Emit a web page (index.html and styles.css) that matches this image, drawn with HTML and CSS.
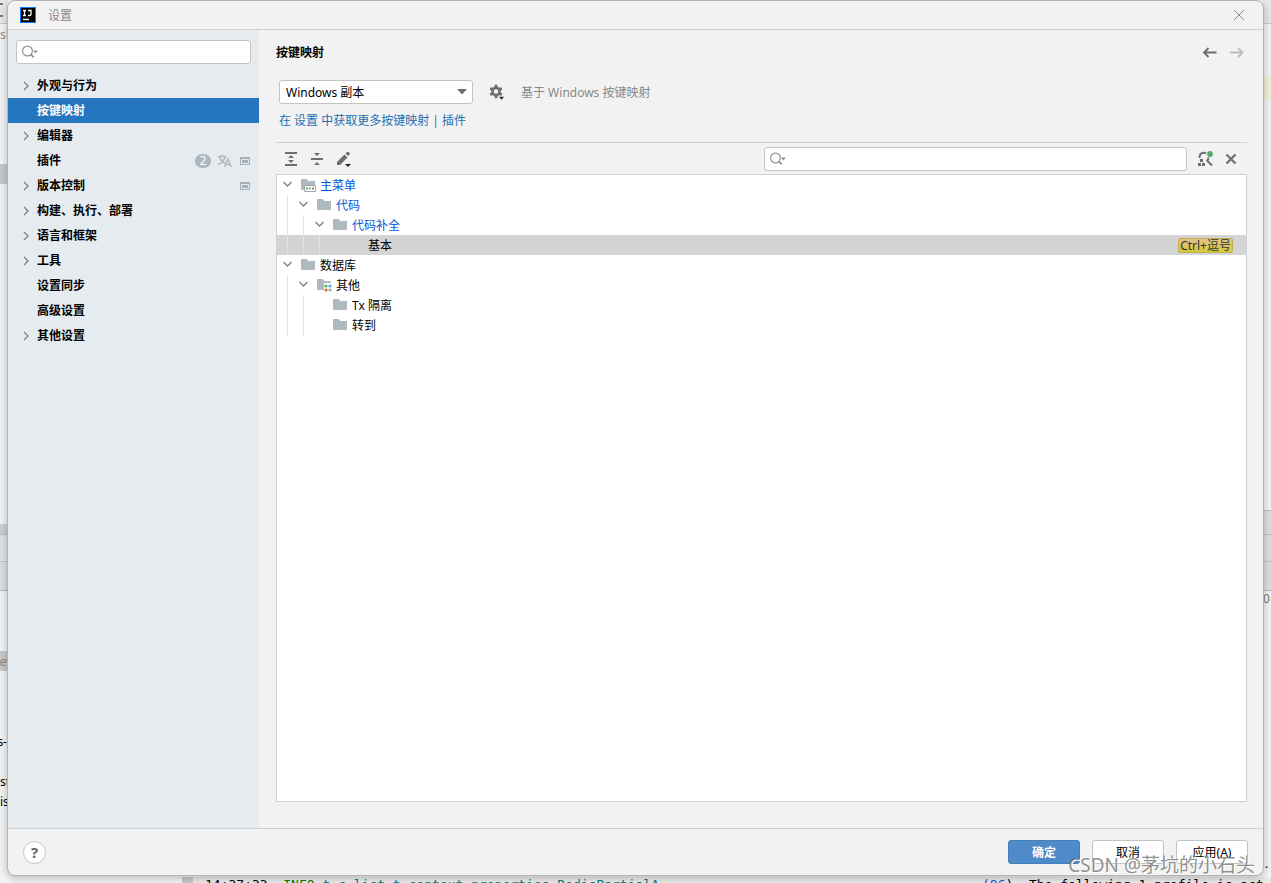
FILE: index.html
```html
<!DOCTYPE html>
<html lang="zh-CN">
<head>
<meta charset="utf-8">
<title>设置</title>
<link rel="stylesheet" href="styles.css">
</head>
<body>
<svg class="defs" aria-hidden="true">
  <symbol id="chev-r" viewBox="0 0 16 16"><path d="M6 4l4 4-4 4" fill="none" stroke="#7f8487" stroke-width="1.4"/></symbol>
  <symbol id="chev-d" viewBox="0 0 16 16"><path d="M3.500 5l4 4 4-4" fill="none" stroke="#7f8487" stroke-width="1.4"/></symbol>
  <symbol id="folder" viewBox="0 0 16 16"><path d="M1 13V2h5.500L8.500 4H15v9z" fill="#aeb9c0"/></symbol>
  <symbol id="search" viewBox="0 0 20 16"><circle cx="6.500" cy="7" r="4.900" fill="none" stroke="#8c969d" stroke-width="1.200"/><path d="M9.800 10.300l3 3" stroke="#8c969d" stroke-width="1.800"/><path d="M12 6.500h5L14.500 9.500z" fill="#8c969d"/></symbol>
  <symbol id="project" viewBox="0 0 16 16"><path fill-rule="evenodd" d="M3 4h10v8H3zm1 2v5h8V6zM5 7h6v3H5z" fill="#a3b1ba"/></symbol>
</svg>
<div class="desktop">
  <div class="backdrop" aria-hidden="true">
    <div class="edge left">
      <i class="top"></i><i class="tick t1"></i><i class="tick t2"></i><i class="grey g2"></i><i class="panel p1"></i><i class="grey g3"></i>
      <span class="code c1">sl</span><span class="code c2">ev</span><span class="code c3">s-</span><span class="code c4">st</span><span class="code c5">is</span>
    </div>
    <div class="edge right">
      <i class="top"></i><i class="yellow"></i><i class="panel p2"></i><span class="code c6">0</span><span class="code c7">.</span>
    </div>
    <div class="console"><span>14:37:33 &nbsp;<b class="info">INFO</b> <b class="cls">t.c.list.t.context.properties.RedisPartialA</b></span><span class="con-right"><b class="num">(86</b>) &nbsp;The following 1 profile is act</span></div>
  </div>
  <main class="dialog">
    <header class="titlebar">
      <svg class="logo" viewBox="0 0 16 16"><path fill="#087cfa" d="M0 0h16v16H0z"/><path fill="#000" d="M1 1h14v14H1z"/><path d="M3 3.500h3M4.500 3.500v5M3 8.500h3M8 3.500h3v3.700q0 1.300-1.500 1.300H8M3 12.500h6" fill="none" stroke="#fff" stroke-width="1.300"/></svg>
      <h1>设置</h1>
      <button class="close" aria-label="关闭"><svg viewBox="0 0 16 16"><path d="M3 3l10 10M13 3L3 13" stroke="#8c8c8c" stroke-width="1"/></svg></button>
    </header>
    <div class="body">
      <aside class="sidebar">
        <label class="search"><svg viewBox="0 0 20 16"><use href="#search"/></svg><input type="text" aria-label="搜索设置"></label>
        <nav>
          <a href="#"><svg><use href="#chev-r"/></svg><span>外观与行为</span></a>
          <a href="#" class="active"><svg></svg><span>按键映射</span></a>
          <a href="#"><svg><use href="#chev-r"/></svg><span>编辑器</span></a>
          <a href="#"><svg></svg><span>插件</span><b class="count">2</b><svg class="translate" viewBox="0 0 16 16"><path d="M1 3.500h8.500M5 1.500v2M2.500 4C4 8 6 9.500 8 10.500M8 4C7 8 4.500 10 1 11.500M7.500 14l3.300-8 3.400 8M8.800 11.500h4.200" fill="none" stroke="#b3bcc2" stroke-width="1.600"/></svg><svg><use href="#project"/></svg></a>
          <a href="#"><svg><use href="#chev-r"/></svg><span>版本控制</span><svg><use href="#project"/></svg></a>
          <a href="#"><svg><use href="#chev-r"/></svg><span>构建、执行、部署</span></a>
          <a href="#"><svg><use href="#chev-r"/></svg><span>语言和框架</span></a>
          <a href="#"><svg><use href="#chev-r"/></svg><span>工具</span></a>
          <a href="#"><svg></svg><span>设置同步</span></a>
          <a href="#"><svg></svg><span>高级设置</span></a>
          <a href="#"><svg><use href="#chev-r"/></svg><span>其他设置</span></a>
        </nav>
      </aside>
      <section class="content">
        <div class="heading"><h2>按键映射</h2>
          <button aria-label="后退"><svg viewBox="0 0 16 16"><path d="M14.500 7.500H2.500M6.500 3L2 7.500 6.500 12" fill="none" stroke="#6e6e6e" stroke-width="1.800"/></svg></button>
          <button aria-label="前进" disabled><svg viewBox="0 0 16 16"><path d="M1 7.500h12M9 3l4.500 4.500L9 12" fill="none" stroke="#bdbdbd" stroke-width="1.800"/></svg></button>
        </div>
        <div class="scheme">
          <div class="combo"><select aria-label="按键映射方案"><option>Windows 副本</option></select><svg viewBox="0 0 10 6"><path d="M0 0h10L5 5.500z" fill="#6e6e6e"/></svg></div>
          <button aria-label="方案操作"><svg viewBox="0 0 16 16"><circle cx="7" cy="7.500" r="3.600" fill="none" stroke="#6e6e6e" stroke-width="2.600"/><path d="M7 .8v2.700M7 11.500v2.700M1.200 4.200l2.300 1.300M10.500 9.500l2.300 1.300M1.200 10.800l2.300-1.300M10.500 5.500l2.300-1.300" stroke="#6e6e6e" stroke-width="2.800"/><path d="M9.500 12.500h6L12.500 16z" fill="#222" stroke="#f2f2f2" stroke-width=".5"/></svg></button>
          <span class="based">基于 Windows 按键映射</span>
        </div>
        <p class="more"><a href="#">在 设置 中获取更多按键映射</a> | <a href="#">插件</a></p>
        <div class="toolbar">
          <button aria-label="全部展开"><svg viewBox="0 0 16 16"><path d="M2 1h12v2H2zM2 13h12v2H2zM5 7l3-3 3 3zM5 9h6l-3 3z" fill="#6e6e6e"/></svg></button>
          <button aria-label="全部折叠"><svg viewBox="0 0 16 16"><path d="M2 7h12v2H2zM5 2h6L8 5zM5 14l3-3 3 3z" fill="#6e6e6e"/></svg></button>
          <button aria-label="编辑快捷键"><svg viewBox="0 0 16 16"><path d="M2 14v-3l7.500-7.500 3 3L5 14zM10.500 2.500L12 1q1-.8 2 .2l.6.800q.8 1-.2 1.800L13 5z" fill="#6e6e6e"/><path d="M10 13h6l-3 3z" fill="#222"/></svg></button>
          <label class="search filter"><svg viewBox="0 0 20 16"><use href="#search"/></svg><input type="text" aria-label="搜索操作"></label>
          <button aria-label="按快捷键查找"><svg viewBox="0 0 16 16"><path d="M2.500 7V5.500C3 1.500 7 1 9 2.500M11.500 6.500q0 2-2 3.500M10.500 10l4.500 4.500" fill="none" stroke="#6e6e6e" stroke-width="2"/><path d="M3 8h3v3H3zM1 12h3v3H1zM5 12h3v3H5z" fill="#6e6e6e"/><circle cx="13" cy="3" r="2.900" fill="#59a869"/></svg></button>
          <button aria-label="清除过滤"><svg viewBox="0 0 16 16"><path d="M3.500 3.500l9 9M12.500 3.500l-9 9" stroke="#6e6e6e" stroke-width="2.200"/></svg></button>
        </div>
        <ul class="tree">
          <li class="blue"><svg><use href="#chev-d"/></svg><svg viewBox="0 0 16 16"><use href="#folder"/><path d="M4 8h12v7.500H4z" fill="#fff"/><path d="M4.500 8.500h11v6h-11z" fill="#fff" stroke="#9aa7b0"/><path d="M6 10.500h2v2H6z" fill="#62b543"/><path d="M9 10.500h2v2H9z" fill="#40b6e0"/><path d="M12 10.500h2v2h-2z" fill="#f26522"/></svg><span>主菜单</span></li>
          <li class="blue"><i></i><svg><use href="#chev-d"/></svg><svg><use href="#folder"/></svg><span>代码</span></li>
          <li class="blue"><i></i><i></i><svg><use href="#chev-d"/></svg><svg><use href="#folder"/></svg><span>代码补全</span></li>
          <li class="selected"><i></i><i></i><i></i><svg></svg><svg></svg><span>基本</span><kbd>Ctrl+逗号</kbd></li>
          <li><svg><use href="#chev-d"/></svg><svg><use href="#folder"/></svg><span>数据库</span></li>
          <li><i></i><svg><use href="#chev-d"/></svg><svg viewBox="0 0 16 16"><use href="#folder"/><path d="M8 6h8v9H8z" fill="#fff"/><circle cx="10" cy="9" r="1.600" fill="#62b543"/><circle cx="14" cy="9" r="1.600" fill="#40b6e0"/><circle cx="10" cy="13" r="1.600" fill="#f26522"/><circle cx="14" cy="13" r="1.600" fill="#9aa7b0"/></svg><span>其他</span></li>
          <li><i></i><i></i><svg></svg><svg><use href="#folder"/></svg><span>Tx 隔离</span></li>
          <li><i></i><i></i><svg></svg><svg><use href="#folder"/></svg><span>转到</span></li>
        </ul>
      </section>
    </div>
    <footer>
      <button class="help" aria-label="帮助">?</button>
      <button class="btn primary">确定</button>
      <button class="btn">取消</button>
      <button class="btn">应用(A)</button>
    </footer>
  </main>
  <div class="watermark">CSDN @茅坑的小石头</div>
</div>
</body>
</html>
```
FILE: styles.css
```css
* { box-sizing: border-box; }
body {
  margin: 0;
  font: 12px/16px "Noto Sans", "Noto Sans CJK SC", sans-serif;
  color: #000;
}
.defs { position: absolute; width: 0; height: 0; }
.desktop {
  position: relative;
  height: 100vh;
  padding: 0 7px 7px;
  overflow: hidden;
  background: #f4f4f4;
}
button { padding: 0; border: 0; background: none; font: inherit; color: inherit; }
svg { display: block; width: 16px; height: 16px; flex: none; }
h1, h2, p, ul { margin: 0; padding: 0; font-size: 12px; }
a { color: inherit; text-decoration: none; }

/* editor visible around the dialog */
.backdrop, .edge { position: absolute; inset: 0; }
.edge { width: 8px; overflow: hidden; }
.edge.right { left: auto; right: 0; }
.edge i, .code, .console { position: absolute; }
.edge i { left: 0; width: 8px; }
.code { white-space: nowrap; }
.edge .top { top: 0; height: 24px; border-bottom: 1px solid #c9c9c9; background: #e8e8e8; }
.tick { height: 2px; background: #777; }
.edge .tick { width: 3px; }
.t1 { top: 3px; }
.t2 { top: 15px; }
.grey { background: #c9c9c9; }
.g2 { top: 164px; height: 20px; }
.g3 { top: 651px; height: 20px; }
.panel { top: 524px; height: 67px; background: linear-gradient(#cfcfcf 10px, #bdbdbd 10px, #bdbdbd 11px, #e2e2e2 11px, #e2e2e2 37px, #c4c4c4 37px, #c4c4c4 38px, #dedede 38px, #dedede 66px, #bbb 66px); }
.p2 { top: 510px; height: 81px; background: linear-gradient(#c0c0c0 1px, #dfdfdf 1px, #dfdfdf 24px, #c0c0c0 24px, #c0c0c0 25px, #dfdfdf 25px, #dfdfdf 51px, #c4c4c4 51px, #c4c4c4 52px, #dedede 52px, #dedede 80px, #bbb 80px); }
.yellow { top: 77px; height: 24px; background: #f3efdc; }
.c1 { left: 0; top: 27px; color: #888; }
.c2 { right: -4px; top: 654px; color: #888; }
.c3 { right: 1px; top: 734px; }
.c4 { left: 0; top: 774px; }
.c5 { left: 0; top: 794px; }
.c6 { left: 0; top: 591px; color: #777; }
.c7 { left: 2px; top: 856px; }
.console {
  left: 182px;
  right: 0;
  bottom: -10px;
  padding-left: 12px;
  font: 13px/16px "DejaVu Sans Mono", monospace;
  white-space: nowrap;
  border-left: 11px solid #c9c9c9;
  background: #ebebeb;
}
.console b { font-weight: 400; }
.con-right { position: absolute; left: 789px; }
.info { color: #0a7a0a; }
.cls { color: #008080; }
.num { color: #2a4bd7; }

.dialog {
  position: relative;
  display: flex;
  flex-direction: column;
  height: 100%;
  border: 1px solid #b4b4b4;
  border-radius: 8px;
  overflow: hidden;
  background: #f2f2f2;
  box-shadow: 0 2px 8px rgba(0, 0, 0, .25);
}
.titlebar {
  display: flex;
  align-items: center;
  height: 29px;
  padding: 0 16px 0 12px;
  border-bottom: 1px solid #d1d1d1;
}
.titlebar h1 { flex: 1; margin-left: 12px; padding-top: 2px; font-weight: 400; color: #888; }
.body { display: flex; flex: 1; min-height: 0; }

.sidebar { width: 251px; background: #e6ebef; }
.search {
  display: flex;
  align-items: center;
  height: 24px;
  padding-left: 4px;
  border: 1px solid #c4c4c4;
  border-radius: 3px;
  background: #fff;
}
.search svg { width: 20px; }
.search input { flex: 1; min-width: 0; border: 0; outline: 0; background: none; font: inherit; }
.sidebar .search { margin: 10px 8px 9px; }
nav a {
  display: flex;
  align-items: center;
  height: 25px;
  padding: 0 6px 0 10px;
  font-weight: 700;
}
nav span { flex: 1; margin-left: 3px; }
nav .active { background: #2675bf; color: #fff; }
.count {
  width: 16px;
  height: 14px;
  border-radius: 7px;
  background: #aab7bf;
  color: #fff;
  font-weight: 400;
  line-height: 14px;
  text-align: center;
}
.translate { margin: 0 4px 0 6px; }

.content {
  display: flex;
  flex: 1;
  flex-direction: column;
  min-width: 0;
  padding: 15px 16px 26px 17px;
}
.heading { display: flex; align-items: center; height: 16px; gap: 11px; padding-right: 2px; }
.heading h2 { flex: 1; }
.scheme { display: flex; align-items: center; margin: 19px 0 9px 3px; }
.combo { position: relative; width: 194px; margin-right: 16px; }
.combo select {
  display: block;
  width: 100%;
  height: 24px;
  padding: 2px 6px 0;
  border: 1px solid #c4c4c4;
  border-radius: 3px;
  background: #fff;
  color: #000;
  font: inherit;
  appearance: none;
}
.combo svg { position: absolute; right: 6px; top: 9px; width: 10px; height: 6px; pointer-events: none; }
.based { margin-left: 16px; padding-top: 2px; color: #888; }
.more { margin-left: 3px; color: #2470b3; }
.toolbar {
  display: flex;
  align-items: center;
  gap: 10px;
  height: 32px;
  margin-top: 13px;
  padding: 0 8px 0 7px;
  border-top: 1px solid #d1d1d1;
}
.filter { width: 423px; margin-left: auto; }
.tree { flex: 1; border: 1px solid #d1d1d1; background: #fff; list-style: none; }
.tree li { display: flex; align-items: center; height: 20px; padding: 0 13px 0 3px; }
.tree li > svg + svg { margin-left: 4px; }
.tree i { width: 16px; height: 20px; background: linear-gradient(#e2e2e2, #e2e2e2) 7px 0 / 1px 100% no-repeat; }
.tree span { margin-left: 4px; padding-top: 1px; }
.blue { color: #0057d8; }
.tree .selected { background: #d4d4d4; }
kbd {
  height: 15px;
  margin-left: auto;
  padding: 0 1px;
  border: 1px solid #c2ae4c;
  border-radius: 2px;
  background: linear-gradient(#e3c28a, #d3ca38);
  color: #333;
  font: inherit;
  line-height: 13px;
}
footer {
  display: flex;
  align-items: center;
  gap: 12px;
  height: 47px;
  padding: 0 15px;
  border-top: 1px solid #d1d1d1;
}
.help {
  width: 23px;
  height: 23px;
  margin-right: auto;
  border: 1px solid #c4c4c4;
  border-radius: 50%;
  background: #fff;
  color: #666;
  font-size: 15px;
  font-weight: 700;
}
.btn { width: 72px; height: 24px; padding-top: 2px; border: 1px solid #c4c4c4; border-radius: 3px; background: #fff; }
.primary { border-color: #4580bd; background: #4f8ac9; color: #fff; font-weight: 700; }
.watermark {
  position: absolute;
  right: 16px;
  bottom: 5px;
  color: rgba(110, 110, 110, .75);
  font-size: 19px;
  line-height: 26px;
  text-shadow: 1px 1px #fff;
  pointer-events: none;
}
```
